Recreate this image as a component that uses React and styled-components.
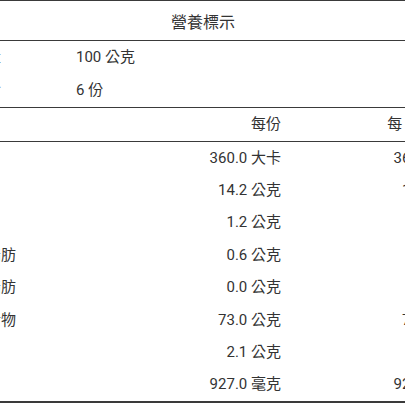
import React from 'react'
import styled, { createGlobalStyle } from 'styled-components'

const GlobalStyle = createGlobalStyle`
  html, body {
    margin: 0;
    padding: 0;
    background: #fff;
  }
  body {
    font-family: Roboto, "Noto Sans CJK TC", sans-serif;
    color: #333;
  }
`

const serving = [
  { label: '每一份量', value: '100 公克' },
  { label: '本包裝含', value: '6 份' }
]

const nutrients = [
  { label: '熱量', perServing: '360.0 大卡', per100: '360.0 大卡' },
  { label: '蛋白質', perServing: '14.2 公克', per100: '14.2 公克' },
  { label: '脂肪', perServing: '1.2 公克', per100: '1.2 公克' },
  { label: '飽和脂肪', perServing: '0.6 公克', per100: '0.6 公克', sub: true },
  { label: '反式脂肪', perServing: '0.0 公克', per100: '0.0 公克', sub: true },
  { label: '碳水化合物', perServing: '73.0 公克', per100: '73.0 公克' },
  { label: '糖', perServing: '2.1 公克', per100: '2.1 公克', sub: true },
  { label: '鈉', perServing: '927.0 毫克', per100: '927.0 毫克' }
]

export default function App() {
  return (
    <Viewport>
      <GlobalStyle />
      <Label>
        <Title>營養標示</Title>
        <ServingBlock>
          {serving.map(row => (
            <ServingRow key={row.label}>
              <Cell>{row.label}</Cell>
              <Cell>{row.value}</Cell>
            </ServingRow>
          ))}
        </ServingBlock>
        <HeaderRow>
          <Cell />
          <Cell align="right">每份</Cell>
          <Cell align="right">每 100 公克</Cell>
        </HeaderRow>
        <Body>
          {nutrients.map(row => (
            <NutrientRow key={row.label}>
              <Cell indent={row.sub}>{row.label}</Cell>
              <Cell align="right">{row.perServing}</Cell>
              <Cell align="right">{row.per100}</Cell>
            </NutrientRow>
          ))}
        </Body>
      </Label>
    </Viewport>
  )
}

const Viewport = styled.div`
  width: 405px;
  height: 405px;
  overflow: hidden;
`

const Label = styled.div`
  margin-left: -75px;
  width: 556px;
  border-top: 1px solid #3a3a3a;
  border-bottom: 2px solid #3a3a3a;
  font-size: 15px;
`

const Title = styled.div`
  height: 39px;
  display: flex;
  align-items: center;
  justify-content: center;
  font-size: 16px;
  border-bottom: 1px solid #3a3a3a;
`

const ServingBlock = styled.div`
  border-bottom: 1px solid #3a3a3a;
  padding-bottom: 0.5px;
`

const ServingRow = styled.div`
  display: grid;
  grid-template-columns: 135px 1fr;
  height: 32.5px;
  align-items: center;
`

const HeaderRow = styled.div`
  display: grid;
  grid-template-columns: 188px 184px 184px;
  height: 33px;
  align-items: center;
  border-bottom: 1px solid #3a3a3a;
`

const Body = styled.div`
  display: grid;
  grid-auto-rows: 32.4px;
`

const NutrientRow = styled.div`
  display: grid;
  grid-template-columns: 188px 184px 184px;
  align-items: center;
`

const Cell = styled.div`
  padding: 0 16px 0 ${props => (props.indent ? '31px' : '16px')};
  text-align: ${props => props.align || 'left'};
  white-space: nowrap;
  line-height: 20px;
`
